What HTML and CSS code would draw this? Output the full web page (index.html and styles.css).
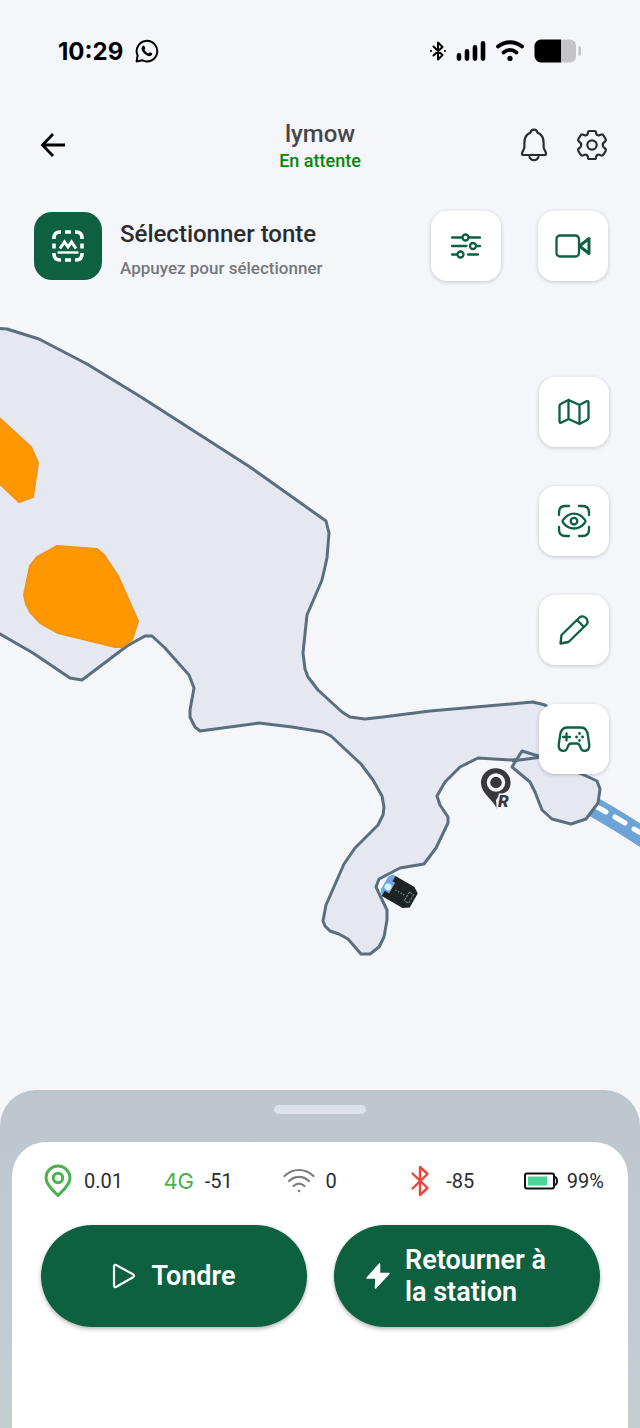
FILE: index.html
```html
<!DOCTYPE html>
<html lang="fr">

<head>
	<meta charset="UTF-8">
	<meta name="viewport" content="width=device-width, initial-scale=1">
	<title>lymow</title>

	<link rel="stylesheet" href="styles.css">
</head>

<body>

	<div class="status">
		<div class="status_left">
			<span class="time">10:29</span>
			<svg width="24" height="24" viewBox="0 0 24 24" fill="none" stroke="#000" stroke-width="2" stroke-linejoin="round">
				<path d="M1.6 22.6 L2.600 16.500 A10.3 10.3 0 1 1 7 21.2 Z" />
				<path d="M7.3 7.2 C8.2 6.2 9.2 6.4 9.6 7.4 L10.3 9.2 C10.4 9.8 9.6 10.4 9.4 10.8 C10.3 12.6 11.6 13.8 13.3 14.5 C13.9 14.1 14.4 13.1 15 13.3 L17 14.3 C17.6 15 16.9 16.7 15.2 17.1 C11.3 17.6 6 12 6.5 9 Z" fill="#000" stroke="none" />
			</svg>
		</div>
		<div class="status_right">
			<svg width="18" height="22" viewBox="0 0 18 22" fill="none" stroke="#000" stroke-width="2" stroke-linejoin="round" stroke-linecap="round">
				<path d="M4.5 6.5 L13.5 15 L9 19.5 V2.5 L13.5 7 L4.5 15.5" />
				<path d="M2 11 H2.1 M15.9 11 H16" />
			</svg>
			<svg width="30" height="22" viewBox="0 0 30 22" stroke="#000" stroke-width="4.6" stroke-linecap="round">
				<path d="M3 15.4 V18.6 M11 11.4 V18.6 M19 7.4 V18.6 M27 3.4 V18.6" />
			</svg>
			<svg width="30" height="22" viewBox="0 0 30 22" fill="none" stroke="#000" stroke-width="3.8" stroke-linecap="round">
				<path d="M3 6.5 C10 .8 20 .8 27 6.5" />
				<path d="M8.5 12.4 C12.5 9.3 17.5 9.3 21.5 12.4" />
				<circle cx="15" cy="18.4" r="2.6" fill="#000" stroke="none" />
			</svg>
			<svg width="48" height="24" viewBox="0 0 48 24">
				<path d="M27 .5 H36 A6 6 0 0 1 42 6.5 V17.5 A6 6 0 0 1 36 23.5 H27 Z" fill="#c3c3c8" />
				<path d="M27 .5 H7 A6.5 6.5 0 0 0 .5 7 V17 A6.5 6.5 0 0 0 7 23.5 H27 Z" fill="#000" />
				<path d="M44.500 7 Q47 7 47 9 V15 Q47 17 44.500 17 Z" fill="#c3c3c8" />
			</svg>
		</div>
	</div>

	<header class="topbar">
		<button class="icon_btn back" aria-label="Retour">
			<svg width="26" height="26" viewBox="0 0 26 26" fill="none" stroke="#000" stroke-width="2.8">
				<path d="M25 13 H2.500 M13 2 L2.500 13 L13 24" />
			</svg>
		</button>
		<div class="device">
			<h1>lymow</h1>
			<p>En attente</p>
		</div>
		<div class="actions">
			<button class="icon_btn" aria-label="Notifications">
				<svg width="28" height="34" viewBox="0 0 28 34" fill="none" stroke="#2b2c31" stroke-width="2.200" stroke-linejoin="round" stroke-linecap="round">
					<path d="M10.600 4.500 C11.200 .6 16.800 .6 17.400 4.500 C22 6.500 23.600 10 23.600 14.500 V19 C23.600 21.500 26 23.400 26 25.500 Q26 27 24.400 27 H3.600 Q2 27 2 25.500 C2 23.400 4.400 21.500 4.400 19 V14.500 C4.400 10 6 6.500 10.600 4.500 Z" />
					<path d="M9.500 29 C11 33.300 17 33.300 18.500 29" />
				</svg>
			</button>
			<button class="icon_btn" aria-label="Réglages">
				<svg width="32" height="32" viewBox="0 0 32 32" fill="none" stroke="#2b2c31" stroke-width="2.200" stroke-linejoin="round">
					<path d="M13.500 2 H18.500 Q20 2 20 3.500 C20.100 6 21.800 7 24 5.900 Q26.500 4.800 27.500 6.500 L29.500 9.800 Q30.400 11.500 29 12.500 C26 14.500 26 17.500 29 19.500 Q30.400 20.500 29.500 22.200 L27.500 25.500 Q26.500 27.200 24 26.100 C21.800 25 20.100 26 20 28.500 Q20 30 18.500 30 H13.500 Q12 30 12 28.500 C11.900 26 10.200 25 8 26.100 Q5.500 27.200 4.500 25.500 L2.500 22.200 Q1.600 20.500 3 19.500 C6 17.500 6 14.500 3 12.500 Q1.600 11.500 2.500 9.800 L4.500 6.500 Q5.500 4.800 8 5.900 C10.200 7 11.900 6 12 3.500 Q12 2 13.500 2 Z" />
					<circle cx="16" cy="16" r="4.700" />
				</svg>
			</button>
		</div>
	</header>

	<div class="mode">
		<button class="select_mode">
			<span class="mode_icon">
				<svg width="32" height="32" viewBox="0 0 32 32" fill="none" stroke="#fff">
					<path d="M2 9 V8 Q2 2 8 2 H9 M23 2 H24 Q30 2 30 8 V9 M30 23 V24 Q30 30 24 30 H23 M9 30 H8 Q2 30 2 24 V23" stroke-width="3.600" />
					<path d="M13 2 H19 M13 30 H19 M2 13.500 V18.500 M30 13.500 V18.500" stroke-width="3.600" />
					<path d="M8 18.500 L12.500 12 L16 17 L19.500 12 L24 18.500" stroke-width="3" />
					<path d="M5.500 22.500 H26.500" stroke-width="2.400" />
				</svg>
			</span>
			<span class="mode_text">
				<span class="mode_title">Sélectionner tonte</span>
				<span class="mode_hint">Appuyez pour sélectionner</span>
			</span>
		</button>
		<div class="mode_tools">
			<button class="tile" aria-label="Paramètres de tonte">
				<svg width="30" height="28" viewBox="0 0 30 28">
					<path d="M1 5.500 H11 M18 5.500 H29 M1 14 H15.500 M25.500 14 H29 M1 22.500 H6 M17 22.500 H27" />
					<circle cx="14.500" cy="5.500" r="3" />
					<circle cx="22" cy="14" r="3" />
					<circle cx="9.500" cy="22.500" r="3" />
				</svg>
			</button>
			<button class="tile" aria-label="Caméra">
				<svg width="36" height="24" viewBox="0 0 36 24">
					<rect x="1.500" y="1.500" width="22.500" height="21" rx="3.500" />
					<path d="M24.500 12 L34 4.500 V19.500 Z" stroke-width="3" />
				</svg>
			</button>
		</div>
	</div>

	<main class="map">
		<svg class="map_canvas" viewBox="0 300 640 822" preserveAspectRatio="xMidYMin slice">
			<!-- path to the station -->
			<path class="road" d="M590 805 Q616 819 655 845" />
			<path class="road_line" d="M597 807 L606 812 M615 817 L625 823 M634 829 L648 837" />

			<!-- mowing zones -->
			<path class="zone" d="M-5 328 L7 329 L39 339 L87 364 L141 397 L250 467 L326 521 L329 533 L327 558 L322 580 L307 615 L303 653 L305 669 L308 677 L318 690 L342 712 L350 717 L365 719 L383 717 L430 711 L533 702 L545 705 L575 730 L560 755 L512 760 L478 758 L460 767 L445 782 L437 796 L440 805 L448 817 L448 823 L436 848 L424 864 L400 868 L379 879 L376 887 L387 910 L387 920 L384 937 L379 947 L370 954 L361 954 L348 939 L339 934 L330 931 L325 926 L323 921 L326 905 L344 864 L355 848 L378 825 L383 815 L384 807 L382 796 L373 780 L361 764 L331 736 L323 732 L292 727 L259 723 L200 731 L195 727 L190 717 L190 710 L194 688 L189 675 L165 648 L152 636 L145 636 L127 646 L82 680 L70 678 L33 653 L-5 631 Z" />
			<path class="zone" d="M522 751 L512 767 L530 782 L535 792 L542 810 L552 819 L571 824 L586 819 L598 803 L600 789 L597 781 L582 774 L545 758 Z" />
			<path class="zone" d="M512 761 L542 757" />

			<!-- no-go areas -->
			<path class="nogo" d="M-5 414 L31 447 L38 463 L33 497 L19 502 L-5 479 Z" />
			<path class="nogo" d="M57 546 L97 549 L104 555 L118 576 L138 621 L132 640 L122 647 L115 647 L58 633 L40 623 L30 612 L26 604 L24 595 L30 566 L37 557 Z" />

			<!-- RTK base -->
			<g class="base">
				<path d="M497 809 C493 799 481 794 481 782.500 A14.800 14.300 0 0 1 510.600 782.500 C510.600 787 509 790 506 792 L499 796 L496 800 Z" />
				<circle cx="496" cy="782.500" r="7.500" fill="none" stroke="#f5f6fa" stroke-width="3.500" />
				<text x="498" y="807" class="base_label">R</text>
			</g>

			<!-- mower -->
			<g transform="translate(399 892) rotate(30)">
				<path d="M-14 -12 H-8 V11 H-14 L-17 7 V-8 Z" fill="#6ea7df" />
				<circle cx="-12" cy="1" r="3.500" fill="#d7efff" />
				<path d="M-8 -12 H11 L17 -8 V8 L11 12 H-13 V6 H-8 V-6 H-11 V-12 Z" fill="#1d2426" />
				<path d="M-4 0 H7" stroke="#aab2b4" stroke-width="1.200" stroke-dasharray="1 2" />
				<path d="M9 -5 H14 V5 H9 Z" fill="none" stroke="#7d8587" stroke-dasharray="3 1" />
			</g>
		</svg>

		<div class="map_tools">
			<button class="tile" aria-label="Carte">
				<svg width="32" height="28" viewBox="0 0 32 28">
					<path d="M1.500 8 Q1.500 6.500 3 5.800 L10.500 2 L21.500 7 L28.500 3.300 Q30.500 2.500 30.500 4.500 V20 Q30.500 21.300 29 22 L21.500 26 L10.500 21 L3.500 24.500 Q1.500 25.300 1.500 23.500 Z M10.500 2 V21 M21.500 7 V26" />
				</svg>
			</button>
			<button class="tile" aria-label="Vue">
				<svg width="34" height="34" viewBox="-1 -1 34 34">
					<path d="M1 10 V7.500 Q1 1 7.500 1 H11 M21 1 H24.500 Q31 1 31 7.500 V10 M31 22 V24.500 Q31 31 24.500 31 H21 M11 31 H7.500 Q1 31 1 24.500 V22" />
					<path d="M5 15 C11 6.500 21 6.500 27 15 Q28 16.200 27 17.500 C21 25.500 11 25.500 5 17.500 Q4 16.200 5 15 Z" />
					<circle cx="16" cy="16.200" r="3.300" />
				</svg>
			</button>
			<button class="tile" aria-label="Modifier">
				<svg width="30" height="30" viewBox="0 0 30 30">
					<path d="M1.500 28.500 L2.500 20 L20.500 2.500 Q23.500 0 27 3 Q30 6.500 27.500 9.500 L9.500 27 Z M18 5 L25 12" />
				</svg>
			</button>
			<button class="tile" aria-label="Pilotage manuel">
				<svg width="34" height="28" viewBox="0 0 34 28">
					<path d="M10 2.500 H24 C29 2.500 30.500 6 31 11 L32.300 20 C32.500 27 25 27.500 23.500 22.500 C22.800 20 22 18.500 20 18.500 H14 C12 18.500 11.200 20 10.500 22.500 C9 27.500 1.500 27 1.700 20 L3 11 C3.500 6 5 2.500 10 2.500 Z" />
					<path d="M6 12 H13 M9.500 8.500 V15.500" />
					<path d="M22.500 8.500 V8.600 M22.500 15.400 V15.500 M19.500 12 H19.600 M25.500 12 H25.600" stroke-width="2.800" />
				</svg>
			</button>
		</div>
	</main>

	<section class="sheet">
		<div class="handle"></div>
		<div class="card">
			<ul class="stats">
				<li>
					<span class="stat_icon">
						<svg width="28" height="34" viewBox="0 0 28 34" fill="none" stroke="#4caf50" stroke-width="3" stroke-linejoin="round">
							<path d="M14 31.500 C11 28.500 2 21 2 14 A12 12 0 0 1 26 14 C26 21 17 28.500 14 31.500 Z" />
							<circle cx="14" cy="14" r="4.700" />
						</svg>
					</span>
					0.01
				</li>
				<li><span class="stat_icon network">4G</span>-51</li>
				<li>
					<span class="stat_icon">
						<svg width="32" height="26" viewBox="0 0 32 26" fill="none" stroke="#7d7d7d" stroke-width="2.200" stroke-linecap="round">
							<path d="M1.500 8 C10 0 22 0 30.500 8 M6 13 C12 7.500 20 7.500 26 13 M10.500 18 C14 15 18 15 21.500 18" />
							<circle cx="16" cy="23" r="1.300" fill="#7d7d7d" stroke="none" />
						</svg>
					</span>
					0
				</li>
				<li>
					<span class="stat_icon">
						<svg width="20" height="32" viewBox="0 0 20 32" fill="none" stroke="#f44336" stroke-width="2.400" stroke-linejoin="round" stroke-linecap="round">
							<path d="M2.500 8.500 L17.500 23 L10 30 V2 L17.500 9 L2.500 23.500" />
						</svg>
					</span>
					-85
				</li>
				<li>
					<span class="stat_icon">
						<svg width="34" height="18" viewBox="0 0 34 18">
							<rect x="1" y="1.500" width="29" height="15" rx="2" fill="none" stroke="#111" stroke-width="2" />
							<path d="M30 5 Q33 5 33 9 Q33 13 30 13" fill="none" stroke="#111" stroke-width="2" />
							<rect x="4" y="4.500" width="19" height="9" fill="#48d597" />
						</svg>
					</span>
					99%
				</li>
			</ul>
			<div class="buttons">
				<button class="big_btn">
					<svg width="24" height="26" viewBox="0 0 24 26" fill="none" stroke="#fff" stroke-width="2.200" stroke-linejoin="round">
						<path d="M2 3.500 Q2 1 4.500 2.200 L21 11.300 Q23 12.700 21 14.200 L4.500 23.800 Q2 25 2 22.500 Z" />
					</svg>
					<span>Tondre</span>
				</button>
				<button class="big_btn">
					<svg width="24" height="26" viewBox="0 0 24 26" fill="#fff" stroke="#fff" stroke-width="1.500" stroke-linejoin="round">
						<path d="M13.500 1 L1 15 H10 L9.500 25 L23 10.500 H13.500 Z" />
					</svg>
					<span>Retourner à la station</span>
				</button>
			</div>
		</div>
	</section>

</body>

</html>
```
FILE: styles.css
```css
* {
	box-sizing: border-box;
}

body {
	display: flex;
	flex-direction: column;
	min-height: 100vh;
	margin: 0;
	background-color: #f5f6fa;
	font-family: Roboto, "Liberation Sans", sans-serif;
	color: #2b2c31;
}

h1,
p,
ul {
	margin: 0;
	padding: 0;
}

button {
	border: 0;
	padding: 0;
	background: none;
	font-family: inherit;
	color: inherit;
	cursor: pointer;
}

svg {
	display: block;
	flex-shrink: 0;
}

.status {
	display: flex;
	justify-content: space-between;
	padding: 38px 58px 40px;
}

.status_left,
.status_right {
	display: flex;
	align-items: center;
	height: 26px;
	gap: 12px;
}

.status_right {
	gap: 9px;
}

.time {
	font-family: Inter, sans-serif;
	font-size: 24px;
	font-weight: 700;
	color: #000;
}

.topbar {
	display: grid;
	grid-template-columns: 1fr auto 1fr;
	align-items: center;
	padding: 12px 32px;
}

.back {
	justify-self: start;
	padding: 0 8px;
}

.device {
	padding-top: 4px;
	text-align: center;
}

.device h1 {
	font-size: 24px;
	line-height: 28px;
	font-weight: 500;
	color: #45464c;
}

.device p {
	font-size: 18px;
	line-height: 26px;
	font-weight: 500;
	color: #0a840a;
}

.actions {
	display: flex;
	align-items: center;
	justify-content: flex-end;
	gap: 28px;
}

.mode {
	display: flex;
	align-items: center;
	justify-content: space-between;
	padding: 25px 32px 19px 34px;
}

.select_mode {
	display: flex;
	align-items: center;
	gap: 18px;
	text-align: left;
}

.mode_icon {
	display: flex;
	align-items: center;
	justify-content: center;
	width: 68px;
	height: 68px;
	border-radius: 18px;
	background-color: #0d6040;
}

.mode_text {
	display: flex;
	flex-direction: column;
	gap: 10px;
	padding-top: 6px;
}

.mode_title {
	font-size: 24px;
	line-height: 28px;
	font-weight: 500;
}

.mode_hint {
	font-size: 17px;
	line-height: 20px;
	font-weight: 500;
	color: #77787c;
}

.mode_tools {
	display: flex;
	gap: 37px;
}

.tile {
	display: flex;
	align-items: center;
	justify-content: center;
	width: 70px;
	height: 70px;
	border-radius: 16px;
	background-color: #fff;
	box-shadow: 0 1px 4px rgba(0, 0, 0, 0.2);
}

.tile svg {
	fill: none;
	stroke: #0d6040;
	stroke-width: 2.3;
	stroke-linecap: round;
	stroke-linejoin: round;
}

.map {
	position: relative;
	display: flex;
	flex: 1;
	justify-content: flex-end;
	align-items: flex-start;
	padding: 77px 31px 71px;
}

/* the map lies behind its tools */
.map_canvas {
	position: absolute;
	inset: 0;
	width: 100%;
	height: 100%;
}

.map_tools {
	position: relative;
	display: flex;
	flex-direction: column;
	gap: 39px;
}

.zone {
	fill: #e5e8f0;
	stroke: #5a6f7e;
	stroke-width: 3;
	stroke-linejoin: round;
}

.nogo {
	fill: #ff9800;
	stroke: #f29311;
	stroke-width: 2;
}

.road {
	fill: none;
	stroke: #6ca3d8;
	stroke-width: 20;
}

.road_line {
	stroke: #fff;
	stroke-width: 5;
	stroke-linecap: round;
}

.base {
	fill: #37373c;
}

.base_label {
	font-size: 17px;
	font-weight: 900;
	font-style: italic;
	stroke: #f5f6fa;
	stroke-width: 3;
	paint-order: stroke;
}

.sheet {
	position: relative;
	margin-top: -32px;
	padding: 15px 12px 0;
	border-radius: 36px 36px 0 0;
	background: linear-gradient(#bcc6cc, #c6ced2);
}

.handle {
	width: 92px;
	height: 9px;
	margin: 0 auto 28px;
	border-radius: 5px;
	background-color: #dde2ea;
}

.card {
	padding: 22px 24px 101px 29px;
	border-radius: 34px 34px 0 0;
	background-color: #fff;
}

.stats {
	display: grid;
	grid-template-columns: repeat(4, 1fr) auto;
	margin-bottom: 27px;
	list-style: none;
}

.stats li {
	display: flex;
	align-items: center;
	gap: 9px;
	height: 34px;
	font-size: 20px;
}

.stat_icon {
	display: flex;
	justify-content: center;
	width: 34px;
}

.network {
	font-family: Inter, sans-serif;
	font-size: 22px;
	color: #4caf50;
}

.buttons {
	display: grid;
	grid-template-columns: 1fr 1fr;
	gap: 27px;
	padding-right: 4px;
}

.big_btn {
	display: flex;
	align-items: center;
	justify-content: center;
	gap: 15px;
	min-height: 102px;
	padding: 0 32px;
	border-radius: 51px;
	background-color: #0d6040;
	box-shadow: 0 2px 4px rgba(0, 0, 0, 0.3);
	font-size: 27px;
	line-height: 32px;
	font-weight: 600;
	text-align: left;
	color: #fff;
}
```
